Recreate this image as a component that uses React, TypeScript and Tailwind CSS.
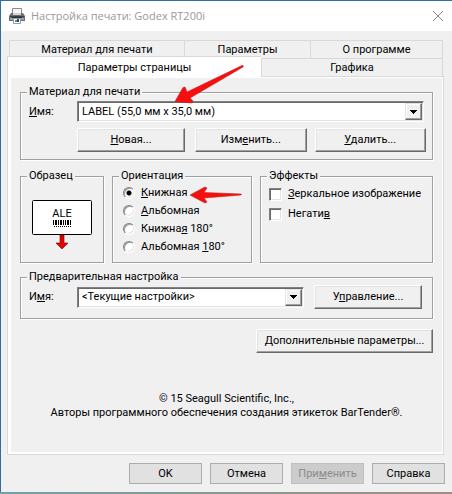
import type { ReactNode } from "react";

const tabs = "border-[#d9d9d9] text-center leading-4";

function Group({ title, className, children }: { title: string; className: string; children: ReactNode }) {
  return (
    <fieldset
      className={`min-w-0 border border-[#a0a0a0] shadow-[1px_1px_0_#fff,inset_1px_1px_0_#fff] ${className}`}
    >
      <legend className="ml-1.5 bg-[#f0f0f0] px-0.5 leading-4">{title}</legend>
      {children}
    </fieldset>
  );
}

function RaisedButton({ className, children }: { className: string; children: ReactNode }) {
  return (
    <button
      type="button"
      className={`h-6 border border-t-white border-l-white border-r-[#696969] border-b-[#696969] bg-[#f0f0f0] text-center leading-4 whitespace-nowrap shadow-[inset_-1px_-1px_0_#a0a0a0,inset_1px_1px_0_#e3e3e3] ${className}`}
    >
      {children}
    </button>
  );
}

function Combo({ id, value, className }: { id: string; value: string; className: string }) {
  return (
    <div className={`relative ${className}`}>
      <select
        id={id}
        defaultValue={value}
        className="block h-[21px] w-full appearance-none border border-t-[#808080] border-r-white border-b-white border-l-[#808080] bg-white pl-1 leading-4 shadow-[inset_1px_1px_0_#696969,inset_-1px_-1px_0_#e3e3e3] outline-none"
      >
        <option value={value}>{value}</option>
      </select>
      <span className="pointer-events-none absolute top-0.5 right-0.5 flex size-[17px] items-center justify-center border border-t-[#e3e3e3] border-r-[#696969] border-b-[#696969] border-l-[#e3e3e3] bg-[#f0f0f0] shadow-[inset_-1px_-1px_0_#a0a0a0,inset_1px_1px_0_#fff]">
        <svg width="7" height="4" viewBox="0 0 7 4" shapeRendering="crispEdges">
          <path d="M0 0h7v1H6v1H5v1H4v1H3V3H2V2H1V1H0z" />
        </svg>
      </span>
    </div>
  );
}

function Radio({ checked, children }: { checked?: boolean; children: ReactNode }) {
  return (
    <label className="flex h-[18px] items-center gap-1.5">
      <input
        type="radio"
        name="orientation"
        defaultChecked={checked}
        className="size-3 shrink-0 appearance-none rounded-full border border-t-[#808080] border-r-white border-b-white border-l-[#808080] bg-white shadow-[inset_1px_1px_0_#a0a0a0,inset_-1px_-1px_0_#e3e3e3] checked:bg-[radial-gradient(circle,#000_2px,#fff_3px)]"
      />
      <span className="whitespace-nowrap">{children}</span>
    </label>
  );
}

function Check({ children }: { children: ReactNode }) {
  return (
    <label className="flex h-5 items-center gap-1.5">
      <input
        type="checkbox"
        className="size-[13px] shrink-0 appearance-none border border-t-[#808080] border-r-white border-b-white border-l-[#808080] bg-white shadow-[inset_1px_1px_0_#696969,inset_-1px_-1px_0_#e3e3e3] checked:bg-black"
      />
      <span className="whitespace-nowrap">{children}</span>
    </label>
  );
}

function DialogButton({ disabled, children }: { disabled?: boolean; children: ReactNode }) {
  return (
    <button
      type="button"
      disabled={disabled}
      className="h-[21px] w-[73px] border border-[#adadad] bg-[#e1e1e1] leading-4 disabled:border-[#bfbfbf] disabled:bg-[#cccccc] disabled:text-[#8b8b8b]"
    >
      {children}
    </button>
  );
}

function PrinterIcon() {
  return (
    <svg width="16" height="16" viewBox="0 0 16 16" className="shrink-0">
      <path d="M3.500 0.500h9v6h-9z" fill="#f7f7f7" stroke="#8a8a8a" />
      <path d="M2 5h2v2h8V5h2l2 3v5H0V8z" fill="#6b6f74" />
      <path d="M4 5h8v2H4z" fill="#d4d6d8" />
      <path d="M1 8h14v1H1z" fill="#3d4045" />
      <path d="M1 10h14v2H1z" fill="#9b9ea2" />
      <path d="M3 9h10v1H3z" fill="#2b2d30" />
      <path d="M4.500 10.500h7v5h-7z" fill="#fff" stroke="#9a9a9a" />
      <path d="M6 12h2v2H6z" fill="#2b9fb5" />
      <path d="M8 11h2v3H8z" fill="#1d4e86" />
    </svg>
  );
}

function LabelPreview() {
  return (
    <svg width="60" height="52" viewBox="0 0 60 52" role="img" aria-label="Образец">
      <rect x="0.5" y="0.5" width="59" height="34" rx="1" fill="#fff" stroke="#000" />
      <text x="30" y="17" textAnchor="middle" fontSize="11" fontFamily="Roboto, sans-serif">
        ALE
      </text>
      <path
        d="M21 20h1v5h-1zM23 20h2v5h-2zM26 20h1v5h-1zM28 20h2v5h-2zM31 20h1v5h-1zM33 20h1v5h-1zM35 20h2v5h-2zM38 20h1v5h-1z"
        shapeRendering="crispEdges"
      />
      <path d="M22 26.500h17" stroke="#000" strokeDasharray="1 1" shapeRendering="crispEdges" />
      <path d="M28 35v8h-4l6 6 6-6h-4v-8z" fill="#e60000" stroke="#7a0000" strokeWidth="0.6" />
    </svg>
  );
}

export default function App() {
  return (
    <div className="relative min-h-screen bg-linear-to-r from-[#6fa3a3] to-[#a08d84] pb-0.5 font-[Roboto,sans-serif] text-[11px] leading-4 text-black">
      <div className="border-t border-l border-[#2f709e] bg-[#f0f0f0]">
        <header className="flex h-[30px] items-center gap-1.5 bg-white pr-1.5 pl-2">
          <PrinterIcon />
          <h1 className="flex-1 font-['Open_Sans',sans-serif] text-[11px] text-[#999999]">
            Настройка печати: Godex RT200i
          </h1>
          <button type="button" aria-label="Закрыть" className="flex size-4 items-center justify-center">
            <svg width="10" height="10" viewBox="0 0 10 10" fill="none" stroke="#8a8a8a">
              <path d="M0 0l10 10M10 0L0 10" />
            </svg>
          </button>
        </header>

        <main className="pt-[9px] pr-2 pl-1.5">
          <nav>
            <div className="mr-px ml-0.5 flex h-[18px] border border-b-0 border-[#d9d9d9]">
              <button type="button" className={`${tabs} w-[175px] border-r`}>
                Материал для печати
              </button>
              <button type="button" className={`${tabs} w-[126px] border-r`}>
                Параметры
              </button>
              <button type="button" className={`${tabs} flex-1`}>
                О программе
              </button>
            </div>
            <div className="-mt-0.5 mr-px flex h-5">
              <button type="button" className={`${tabs} relative -mb-0.5 w-[254px] border-t border-l bg-white`}>
                Параметры страницы
              </button>
              <button type="button" className={`${tabs} mt-0.5 flex-1 border border-b-0`}>
                Графика
              </button>
            </div>
          </nav>

          <section className="border border-[#d9d9d9] bg-[#f0f0f0] shadow-[inset_3px_0_0_#fff,inset_-1px_0_0_#fff,inset_0_1px_0_#fff,inset_0_-2px_0_#fff]">
            <div className="pt-[7px] pr-2.5 pb-[34px] pl-3">
              <Group title="Материал для печати" className="h-[76px]">
                <div className="flex items-center pt-px pr-2 pl-2">
                  <label htmlFor="stock" className="w-12">
                    <u>И</u>мя:
                  </label>
                  <Combo id="stock" value="LABEL (55,0 мм x 35,0 мм)" className="flex-1" />
                </div>
                <div className="mt-1.5 flex gap-2 pr-1.5 pl-14">
                  <RaisedButton className="mr-0.5 w-[108px]">
                    <u>Н</u>овая...
                  </RaisedButton>
                  <RaisedButton className="flex-1">
                    Изм<u>е</u>нить...
                  </RaisedButton>
                  <RaisedButton className="flex-1">
                    <u>У</u>далить...
                  </RaisedButton>
                </div>
              </Group>

              <div className="mt-2 flex gap-2">
                <Group title="Образец" className="h-[95px] w-[84px]">
                  <div className="flex justify-center pt-4">
                    <LabelPreview />
                  </div>
                </Group>
                <Group title="Ориентация" className="h-[95px] w-[140px]">
                  <div className="pl-2.5">
                    <Radio checked>
                      <u>К</u>нижная
                    </Radio>
                    <Radio>
                      <u>А</u>льбомная
                    </Radio>
                    <Radio>
                      Книжна<u>я</u> 180°
                    </Radio>
                    <Radio>
                      Альбомная <u>1</u>80°
                    </Radio>
                  </div>
                </Group>
                <Group title="Эффекты" className="h-[95px] flex-1">
                  <div className="pl-2">
                    <Check>
                      <u>З</u>еркальное изображение
                    </Check>
                    <Check>
                      Негати<u>в</u>
                    </Check>
                  </div>
                </Group>
              </div>

              <Group title="Предварительная настройка" className="mt-1.5 h-[50px]">
                <div className="flex items-center pr-2.5 pl-2">
                  <label htmlFor="preset" className="w-12">
                    И<u>м</u>я:
                  </label>
                  <Combo id="preset" value="<Текущие настройки>" className="flex-1" />
                  <RaisedButton className="ml-2.5 w-[108px]">
                    У<u>п</u>равление...
                  </RaisedButton>
                </div>
              </Group>

              <div className="mt-2.5 flex justify-end">
                <RaisedButton className="w-[177px]">
                  <u>Д</u>ополнительные параметры...
                </RaisedButton>
              </div>

              <p className="mt-[39px] text-center leading-[14px]">
                © 15 Seagull Scientific, Inc.,
                <br />
                Авторы программного обеспечения создания этикеток BarTender®.
              </p>
            </div>
          </section>
        </main>

        <footer className="flex justify-end gap-2 pt-2 pr-[7px] pb-2">
          <DialogButton>OK</DialogButton>
          <DialogButton>Отмена</DialogButton>
          <DialogButton disabled>
            При<u>м</u>енить
          </DialogButton>
          <DialogButton>Справка</DialogButton>
        </footer>
      </div>

      {/* Callout arrows */}
      <svg
        className="pointer-events-none absolute top-[62px] left-[172px]"
        width="74"
        height="44"
        viewBox="0 0 74 44"
        fill="#f50f0f"
        stroke="#c81e1e"
        strokeWidth="0.6"
        strokeLinejoin="round"
      >
        <path d="M3 39.500L11 25.500 13 25 15 30 70 3.500Q72 3 71 5L18 36 21 39 20 41z" />
      </svg>
      <svg
        className="pointer-events-none absolute top-[186px] left-[188px]"
        width="56"
        height="18"
        viewBox="0 0 56 18"
        fill="#f50f0f"
        stroke="#c81e1e"
        strokeWidth="0.6"
        strokeLinejoin="round"
      >
        <path d="M2 9L17 1l2 1-3 4.500L53 8q1 .5 0 1L16 12l3 4-2 1z" />
      </svg>
    </div>
  );
}
